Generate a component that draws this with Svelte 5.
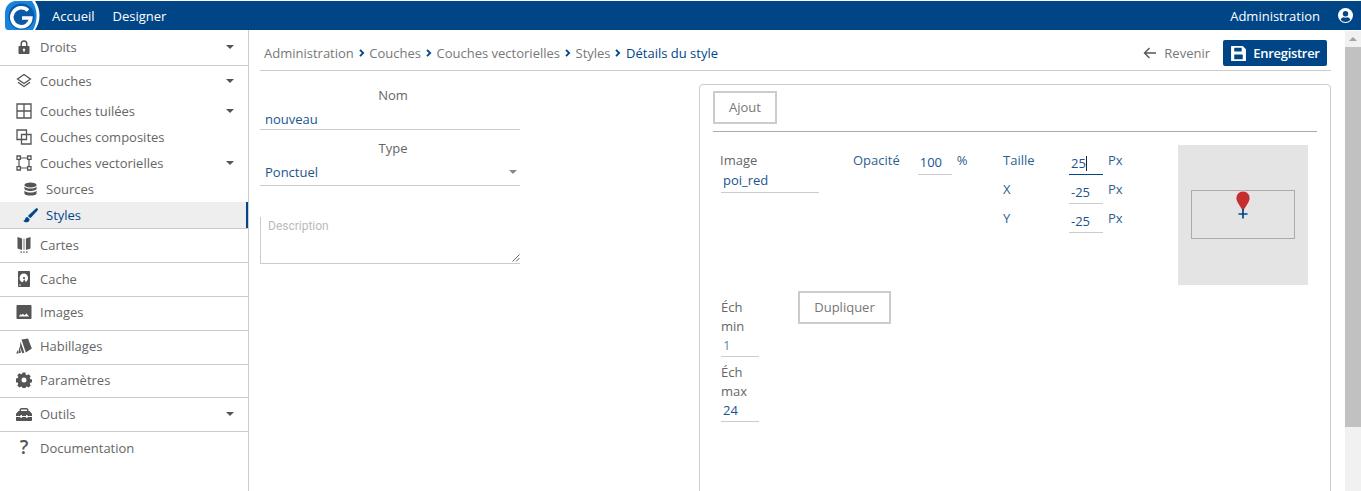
<script>
  const crumbs = ['Administration', 'Couches', 'Couches vectorielles', 'Styles'];
</script>

<div class="app">
  <header class="topbar">
    <svg class="logo" viewBox="0 0 40 29" width="40" height="29" aria-hidden="true">
      <path d="M0 0H35C41 9 41 20 35 29H0Z" fill="#fff"/>
      <path d="M5 25V12C5 5 10 0 16 0H32C38 8 38 20 33 29H8C6 29 5 27 5 25Z" fill="#1783dc"/>
      <circle cx="21.500" cy="15.500" r="13" fill="#0a5aa8"/>
      <path d="M28 9.500A9.500 9.500 0 1 0 30.800 17H22" fill="none" stroke="#fff" stroke-width="3.600"/>
    </svg>
    <nav class="topnav"><span>Accueil</span><span>Designer</span></nav>
    <div class="topright">
      <span>Administration</span>
      <svg viewBox="0 0 16 16" width="15" height="15" aria-hidden="true">
        <circle cx="8" cy="8" r="8" fill="#fff"/>
        <circle cx="8" cy="6.200" r="2.900" fill="#00468a"/>
        <path d="M2.900 12.600C3.600 10.600 5 9.900 6 9.900 7.300 10.400 8.700 10.400 10 9.900 11 9.900 12.400 10.600 13.100 12.600 11.800 14.100 10 15 8 15S4.200 14.100 2.900 12.600Z" fill="#00468a"/>
      </svg>
    </div>
  </header>

  <div class="body">
    <aside class="sidebar">
      <section class="group g-droits">
        <div class="item">
          <svg class="ic" viewBox="0 0 16 16"><path d="M4.500 7V4.800a3.500 3.500 0 0 1 7 0V7H10V4.800a2 2 0 0 0-4 0V7Z"/><path fill-rule="evenodd" d="M3.500 7h9c.6 0 1 .4 1 1v6c0 .6-.4 1-1 1h-9c-.6 0-1-.4-1-1V8c0-.6.4-1 1-1Zm4.500 2.400a1.300 1.300 0 0 0-.6 2.400v1h1.200v-1A1.300 1.300 0 0 0 8 9.400Z"/></svg>
          <span>Droits</span><i class="caret"></i>
        </div>
      </section>
      <section class="group g-couches">
        <div class="item it-couches">
          <svg class="ic" viewBox="0 0 16 16"><path d="M8 1.500 14.500 6 8 10.500 1.500 6Z" fill="none" stroke="#555" stroke-width="1.300"/><path d="M2 9.300 8 13.500 14 9.300" fill="none" stroke="#555" stroke-width="1.300"/></svg>
          <span>Couches</span><i class="caret"></i>
        </div>
        <div class="item it-sub">
          <svg class="ic" viewBox="0 0 16 16"><path fill="none" stroke="#555" stroke-width="1.300" d="M1 1h14v14H1ZM8 1v14M1 8h14"/></svg>
          <span>Couches tuilées</span><i class="caret"></i>
        </div>
        <div class="item it-sub">
          <svg class="ic" viewBox="0 0 16 16"><path fill="none" stroke="#555" stroke-width="1.300" d="M1 1h9.500v9.500H1ZM5.500 5.500H15V15H5.500Z"/></svg>
          <span>Couches composites</span>
        </div>
        <div class="item it-sub">
          <svg class="ic" viewBox="0 0 16 16"><path fill="none" stroke="#555" stroke-width="1.200" d="M3.500 3h9M3.500 13h9M3 3.500v9M13 3.500v9"/><path fill="#fff" stroke="#555" stroke-width="1.300" d="M1 1h3.400v3.400H1ZM11.600 1H15v3.400h-3.400ZM1 11.600h3.400V15H1ZM11.600 11.600H15V15h-3.400Z"/></svg>
          <span>Couches vectorielles</span><i class="caret"></i>
        </div>
        <div class="item it-leaf">
          <svg class="ic" viewBox="0 0 14 16"><ellipse cx="7" cy="3.200" rx="6.500" ry="2.600"/><path d="M.5 4.800c1 1.500 3.500 2.200 6.500 2.200s5.500-.7 6.500-2.200V7c0 1.500-3 2.600-6.500 2.600S.5 8.500.5 7ZM.5 9c1 1.500 3.500 2.200 6.500 2.200S12.500 10.500 13.500 9v2.900c0 1.500-3 2.600-6.500 2.600S.5 13.400.5 11.900Z"/></svg>
          <span>Sources</span>
        </div>
        <div class="item it-leaf active">
          <svg class="ic" viewBox="0 0 16 16"><path d="M15.500.6c-.6-.5-1.400-.4-2 .1L6.200 7.400c-.4.4-.7.900-.8 1.300l2.300 2c.5-.2.900-.5 1.200-.9L15.700 2.500c.4-.6.300-1.400-.2-1.900Z"/><path d="M4.700 9.600C3 9.700 2.400 11 2.100 12.300 1.900 13.100 1.100 13.500.3 13.500c1.300 1.600 3.400 2 5 1.300 1.300-.6 1.800-1.700 1.600-3.200Z"/></svg>
          <span>Styles</span>
        </div>
      </section>
      <section class="group">
        <div class="item">
          <svg class="ic" viewBox="0 0 16 16"><path d="M1.500 0 6 1.500V13L1.500 11.500ZM10 1.500 14.500 0V11.500L10 13Z"/><path d="M6.800 1.600 9.200 1.600V12.800H6.800Z" fill="#bbb"/><path d="M4.500 14.500h1.500v1.200H4.500ZM7.200 14.500h1.500v1.200H7.200ZM10 14.500h1.500v1.200H10Z"/></svg>
          <span>Cartes</span>
        </div>
      </section>
      <section class="group">
        <div class="item">
          <svg class="ic" viewBox="0 0 16 16"><path fill-rule="evenodd" d="M3 0h10c.6 0 1 .4 1 1v14c0 .6-.4 1-1 1H3c-.6 0-1-.4-1-1V1c0-.6.4-1 1-1Zm5 2.500a4.500 4.500 0 0 0-1.200 8.800l1.400-3 1.500 2.600A4.500 4.500 0 0 0 8 2.500Zm0 3.400a1.100 1.100 0 1 1 0 2.200 1.100 1.100 0 0 1 0-2.200Z"/><circle cx="4" cy="14" r=".8" fill="#fff"/></svg>
          <span>Cache</span>
        </div>
      </section>
      <section class="group">
        <div class="item tight">
          <svg class="ic" viewBox="0 0 16 16"><path fill-rule="evenodd" d="M1.500 1h13c.6 0 1 .4 1 1v12c0 .6-.4 1-1 1h-13c-.6 0-1-.4-1-1V2c0-.6.4-1 1-1Zm1.500 11.500h10l-2.500-3-2 1.800-1.800-1.600-1.300 1.200-1.100-.7Z"/></svg>
          <span>Images</span>
        </div>
      </section>
      <section class="group">
        <div class="item tight">
          <svg class="ic" viewBox="0 0 16 16"><path d="M5.500 1.500 12 .5l3.800 10-6 4Z"/><path d="M4.500 3.500 8.300 14.500 6.500 15.500 4 9.500ZM3.300 8.500 5 14.500l-1.300.8-1.200-.8ZM1.700 12 2.500 15.500H.2Z"/></svg>
          <span>Habillages</span>
        </div>
      </section>
      <section class="group">
        <div class="item short">
          <svg class="ic" viewBox="0 0 16 16"><path fill-rule="evenodd" d="M6.600.6h2.800l.4 2.100 1 .5 1.900-1 2 2-1 1.900.5 1 2.100.4v2.800l-2.100.4-.5 1 1 1.900-2 2-1.900-1-1 .5-.4 2.100H6.600l-.4-2.100-1-.5-1.900 1-2-2 1-1.900-.5-1-2.100-.4V6.500l2.100-.4.5-1-1-1.900 2-2 1.900 1 1-.5ZM8 5.500a2.500 2.500 0 1 0 0 5 2.500 2.500 0 0 0 0-5Z"/></svg>
          <span>Paramètres</span>
        </div>
      </section>
      <section class="group">
        <div class="item">
          <svg class="ic" viewBox="0 0 16 14"><path d="M3.500 5V3c0-1 .8-2 2-2h5c1.200 0 2 1 2 2v2h-1.500V3c0-.3-.2-.5-.5-.5h-5c-.3 0-.5.200-.5.500v2Z"/><path d="M2.500 4h11L16 6.700V9H11.500V8H10v1H6V8H4.500v1H0V6.700ZM0 10h4.500v1H6v-1h4v1h1.500v-1H16v3c0 .6-.4 1-1 1H1c-.6 0-1-.4-1-1Z"/></svg>
          <span>Outils</span><i class="caret"></i>
        </div>
      </section>
      <section class="group last">
        <div class="item">
          <span class="q">?</span>
          <span>Documentation</span>
        </div>
      </section>
    </aside>

    <main class="content">
      <div class="headbar">
        <div class="crumbs">
          {#each crumbs as c}
            <span>{c}</span>
            <svg class="chev" viewBox="0 0 6 8" width="6" height="8"><path d="M1 .8 4.200 4 1 7.200" fill="none" stroke="#00468a" stroke-width="1.800"/></svg>
          {/each}
          <span class="cur">Détails du style</span>
        </div>
        <div class="actions">
          <span class="back">
            <svg viewBox="0 0 14 12" width="14" height="12"><path d="M13 6H2M6.500 1 1.500 6l5 5" fill="none" stroke="#555" stroke-width="1.400"/></svg>
            Revenir
          </span>
          <button class="save">
            <svg viewBox="0 0 16 16" width="17" height="17"><path fill-rule="evenodd" d="M1.500 1H12l3 3v10.500c0 .3-.2.500-.5.500h-13c-.3 0-.5-.2-.5-.5v-13c0-.3.200-.5.500-.5ZM4 2.500V6h7V2.500ZM4 9v4.500h8V9Z" fill="#fff"/></svg>
            Enregistrer
          </button>
        </div>
      </div>

      <div class="columns">
        <form class="form">
          <label class="flabel" for="nom">Nom</label>
          <div class="finput" id="nom">nouveau</div>
          <label class="flabel l2" for="type">Type</label>
          <div class="finput select" id="type">Ponctuel<i class="caret small"></i></div>
          <div class="area">Description
            <svg class="grip" viewBox="0 0 8 8" width="8" height="8"><path d="M7.500.5.500 7.500M7.500 4 4 7.500" stroke="#666" stroke-width="1" fill="none"/></svg>
          </div>
        </form>

        <section class="panel">
          <div class="tabs"><button class="ghost">Ajout</button></div>
          <div class="editor">
            <div class="c-img">
              <div class="lab">Image</div>
              <div class="val vimg">poi_red</div>
            </div>
            <div class="c-op">
              <span class="blue">Opacité</span>
              <span class="val v100">100</span>
              <span class="blue unit">%</span>
            </div>
            <div class="c-size">
              <span class="blue">Taille</span><span class="val focus">25<b class="cursor"></b></span><span class="blue">Px</span>
              <span class="blue">X</span><span class="val">-25</span><span class="blue">Px</span>
              <span class="blue">Y</span><span class="val">-25</span><span class="blue">Px</span>
            </div>
            <div class="preview">
              <div class="box">
                <svg viewBox="0 0 16 30" width="16" height="30"><path d="M8 1a7 7 0 0 1 7 7.500c0 3-3.500 7.500-7 13-3.500-5.500-7-10-7-13A7 7 0 0 1 8 1Z" fill="#c62d2f" stroke="#eee" stroke-width=".8"/><path d="M8 19v9.500M3.500 24h9" stroke="#00468a" stroke-width="1.700"/></svg>
              </div>
            </div>
          </div>
          <div class="lower">
            <div class="scales">
              <div class="lab">Éch<br />min</div>
              <div class="val sv light">1</div>
              <div class="lab">Éch<br />max</div>
              <div class="val sv">24</div>
            </div>
            <button class="ghost dup">Dupliquer</button>
          </div>
        </section>
      </div>
    </main>

    <div class="scrollbar">
      <i class="arrow"></i>
      <div class="thumb"></div>
    </div>
  </div>
</div>

<style>
  :global(body) { margin: 0; background: #fff; overflow: hidden; }
  .app {
    width: 1361px; height: 491px; overflow: hidden; display: flex; flex-direction: column;
    font-family: "Open Sans", sans-serif; font-size: 13px; color: #666;
  }
  .topbar {
    height: 29px; margin-top: 1px; background: #004687; color: #fff; display: flex; align-items: center;
    flex: none;
  }
  .logo { flex: none; }
  .topnav { display: flex; gap: 18px; margin-left: 12px; font-weight: 500; font-size: 13px; }
  .topright { margin-left: auto; display: flex; align-items: center; gap: 18px; padding-right: 8px; }
  .body { flex: 1; display: flex; min-height: 0; }
  .sidebar { width: 248px; flex: none; border-right: 1px solid #ccc; }
  .group { border-bottom: 1px solid #ccc; }
  .group.last { border-bottom: 0; }
  .item {
    height: 33px; display: flex; align-items: center; padding: 0 14px 2px 16px; position: relative; color: #666;
    box-sizing: border-box;
  }
  .g-droits .item { height: 35px; }
  .item.tight { padding-bottom: 4px; }
  .item.short { height: 32px; }
  .ic { width: 16px; height: 16px; margin-right: 8px; flex: none; fill: #555; }
  .it-couches { height: 32px; }
  .it-sub { height: 26px; padding-bottom: 0; }
  .it-leaf { height: 26px; padding-left: 23px; padding-bottom: 0; }
  .it-leaf .ic { width: 15px; height: 15px; }
  .active { color: #00468a; background: #eee; box-shadow: inset -2px 0 0 #00468a; }
  .active .ic { fill: #00468a; }
  .caret { margin-left: auto; width: 0; height: 0; border: 4.500px solid transparent; border-top: 4.500px solid #555; border-bottom: 0; }
  .caret.small { border-top-color: #888; }
  .q { width: 16px; margin-right: 8px; text-align: center; font-size: 19px; font-weight: 600; color: #555; line-height: 1; }

  .content { flex: 1; padding: 0 14px 0 11px; min-width: 0; }
  .headbar {
    display: flex; align-items: center; justify-content: space-between; border-bottom: 1px solid #ccc;
    padding: 6px 4px 0 4px; width: 1071px; margin-right: -20px;
    box-sizing: border-box; height: 41px;
  }
  .crumbs { display: flex; align-items: center; gap: 4.750px; color: #777; }
  .cur { color: #00468a; }
  .actions { display: flex; align-items: center; gap: 13px; }
  .back { display: flex; align-items: center; gap: 7px; color: #777; }
  .save {
    background: #004687; color: #fff; border: 0; border-radius: 2px; height: 26px; width: 104px;
    font: 600 13px "Open Sans", sans-serif; letter-spacing: -.3px; display: flex; align-items: center; justify-content: center; gap: 6px; padding: 0;
  }

  .columns { display: flex; align-items: flex-start; }
  .form { width: 260px; margin-top: 15px; flex: none; font-size: 13px; }
  .flabel { display: block; text-align: center; height: 18px; line-height: 18px; color: #666; padding-left: 6px; }
  .flabel.l2 { margin-top: 9px; }
  .finput {
    height: 26px; line-height: 22px; padding-top: 4px; border-bottom: 1px solid #ccc; color: #1a5590; padding-left: 5px; position: relative;
    display: flex; align-items: center; box-sizing: border-box;
  }
  .finput.select { height: 29px; padding-top: 2px; line-height: 26px; }
  .select .caret { margin-right: 3px; }
  .area {
    margin-top: 31px; border: 1px solid #ccc; border-top: 0; border-right: 0; font: 12px "Roboto", sans-serif; color: #bbb;
    padding: 2px 0 0 7px; position: relative; box-sizing: content-box; height: 44px;
  }
  .grip { position: absolute; right: 0; bottom: 1px; }

  .panel {
    margin-left: 179px; margin-top: 13px; width: 632px; height: 460px; flex: none; box-sizing: border-box;
    border: 1px solid #ccc; border-radius: 4px; padding: 6px 13px;
  }
  .tabs { border-bottom: 1px solid #aaa; padding-bottom: 7px; }
  .ghost {
    display: block; height: 33px; width: 64px; background: #fff; border: 2px solid #ccc; font: 13px "Open Sans", sans-serif; color: #777; padding: 0 0 2px;
  }
  .editor { display: flex; align-items: flex-start; padding: 13px 0 0 7px; height: 146px; box-sizing: content-box; }
  .lab { color: #666; line-height: 19px; }
  .blue { color: #2d5f8f; }
  .val { color: #1a5590; border-bottom: 1px solid #ccc; display: block; line-height: 18px; box-sizing: border-box; }
  .c-img { width: 133px; padding-top: 6px; }
  .vimg { width: 98px; margin-left: 1px; padding: 1px 0 3px 2px; }
  .c-op { width: 150px; display: flex; align-items: flex-start; padding-top: 6px; line-height: 19px; }
  .v100 { width: 34px; margin: 1px 0 0 18px; padding: 1px 0 0 2px; height: 23px; line-height: 18px; }
  .unit { margin-left: 5px; }
  .c-size { display: grid; grid-template-columns: 66px 34px 1fr; column-gap: 0; width: 175px; grid-auto-rows: 29px; padding-top: 6px; }
  .c-size .blue:nth-child(3n) { padding-left: 5px; }
  .c-size .val { height: 24px; padding: 3px 0 0 2px; line-height: 18px; }
  .focus { border-bottom-color: #00468a !important; }
  .cursor { display: inline-block; width: 1px; height: 15px; background: #222; vertical-align: -3px; }
  .preview { width: 130px; height: 140px; background: #e4e4e4; padding: 45px 13px 0; box-sizing: border-box; flex: none; }
  .box { height: 49px; border: 1px solid #aaa; box-sizing: border-box; display: flex; justify-content: center; position: relative; }
  .box svg { margin-top: -1px; }
  .lower { display: flex; align-items: flex-start; padding-left: 8px; }
  .scales { width: 38px; margin-right: 39px; padding-top: 7px; }
  .sv { height: 21px; padding: 0 0 0 2px; margin-bottom: 6px; }
  .light { color: #5f8ab5; }
  .dup { width: 93px; }

  .scrollbar { width: 16px; flex: none; background: #f1f1f1; position: relative; margin-top: 1px; margin-left: auto; }
  .arrow {
    position: absolute; top: 6px; left: 4px; width: 0; height: 0; border: 4px solid transparent; border-bottom: 4px solid #a3a3a3; border-top: 0;
  }
  .thumb { position: absolute; left: 0; right: 0; top: 16px; height: 380px; background: #c1c1c1; }
</style>
